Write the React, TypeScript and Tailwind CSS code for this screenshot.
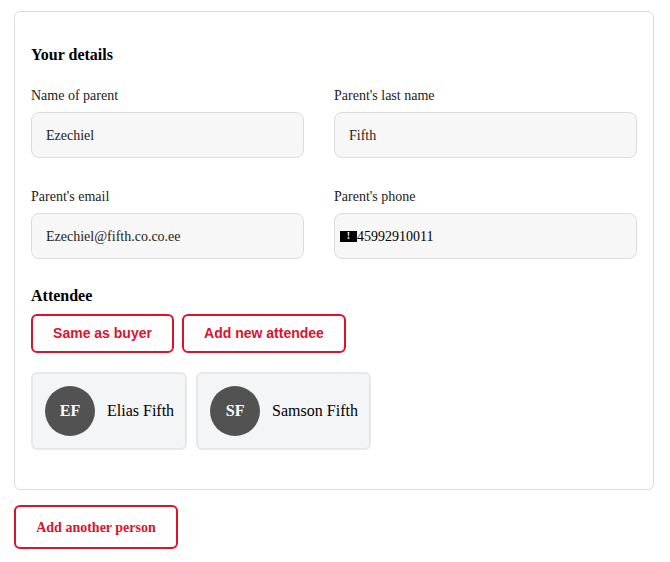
import React from 'react';

const serif = "font-['Liberation_Serif',serif]";

function Field({ label, value, className = '' }: { label: string; value: React.ReactNode; className?: string }) {
  return (
    <div className={`flex flex-col ${className}`}>
      <label className="text-[14px] leading-[17px] text-[#222] mb-[8px]">{label}</label>
      <div className="h-[46px] rounded-[8px] border border-[#dcdcdc] bg-[#f7f7f7] flex items-center px-[14px] text-[14px] text-[#222]">
        {value}
      </div>
    </div>
  );
}

function Attendee({ initials, name }: { initials: string; name: string }) {
  return (
    <div className="h-[78px] flex items-center gap-[12px] pl-[12px] pr-[11px] rounded-[6px] border-2 border-[#e8e8ea] bg-[#f4f5f7]">
      <div className={`w-[50px] h-[50px] rounded-full bg-[#525252] flex items-center justify-center text-white font-bold text-[16px] ${serif}`}>
        {initials}
      </div>
      <span className="text-[16px] text-black">{name}</span>
    </div>
  );
}

export default function App() {
  return (
    <div className={`bg-white min-h-[562px] pl-[14px] pr-[16px] pt-[11px] ${serif}`}>
      <div className="border border-[#dcdcdc] rounded-[6px] px-[16px] pt-[33px] pb-[39px]">
        <h2 className="text-[16px] font-bold leading-[20px] text-black">Your details</h2>
        <div className="grid grid-cols-2 mt-[22px] gap-y-[30px]">
          <Field label="Name of parent" value="Ezechiel" className="pr-[30px]" />
          <Field label="Parent's last name" value="Fifth" />
          <Field label="Parent's email" value="Ezechiel@fifth.co.co.ee" className="pr-[30px]" />
          <Field
            label="Parent's phone"
            value={
              <span className="flex items-center -ml-[9px] text-black">
                <span className="inline-flex items-center justify-center w-[17px] h-[11px] bg-black text-white text-[10px] font-bold leading-none">!</span>
                45992910011
              </span>
            }
          />
        </div>
        <h2 className="text-[16px] font-bold leading-[20px] text-black mt-[27px]">Attendee</h2>
        <div className="flex gap-[8px] mt-[8px] font-['Liberation_Sans',sans-serif]">
          <button className="h-[39px] w-[143px] rounded-[6px] border-2 border-[#e0112b] text-[#e0112b] font-bold text-[14px]">Same as buyer</button>
          <button className="h-[39px] w-[164px] rounded-[6px] border-2 border-[#e0112b] text-[#e0112b] font-bold text-[14px]">Add new attendee</button>
        </div>
        <div className="flex gap-[9px] mt-[19px]">
          <Attendee initials="EF" name="Elias Fifth" />
          <Attendee initials="SF" name="Samson Fifth" />
        </div>
      </div>
      <button className="mt-[15px] h-[44px] w-[164px] rounded-[6px] border-2 border-[#e0112b] text-[#e0112b] font-bold text-[14px]">
        Add another person
      </button>
    </div>
  );
}
